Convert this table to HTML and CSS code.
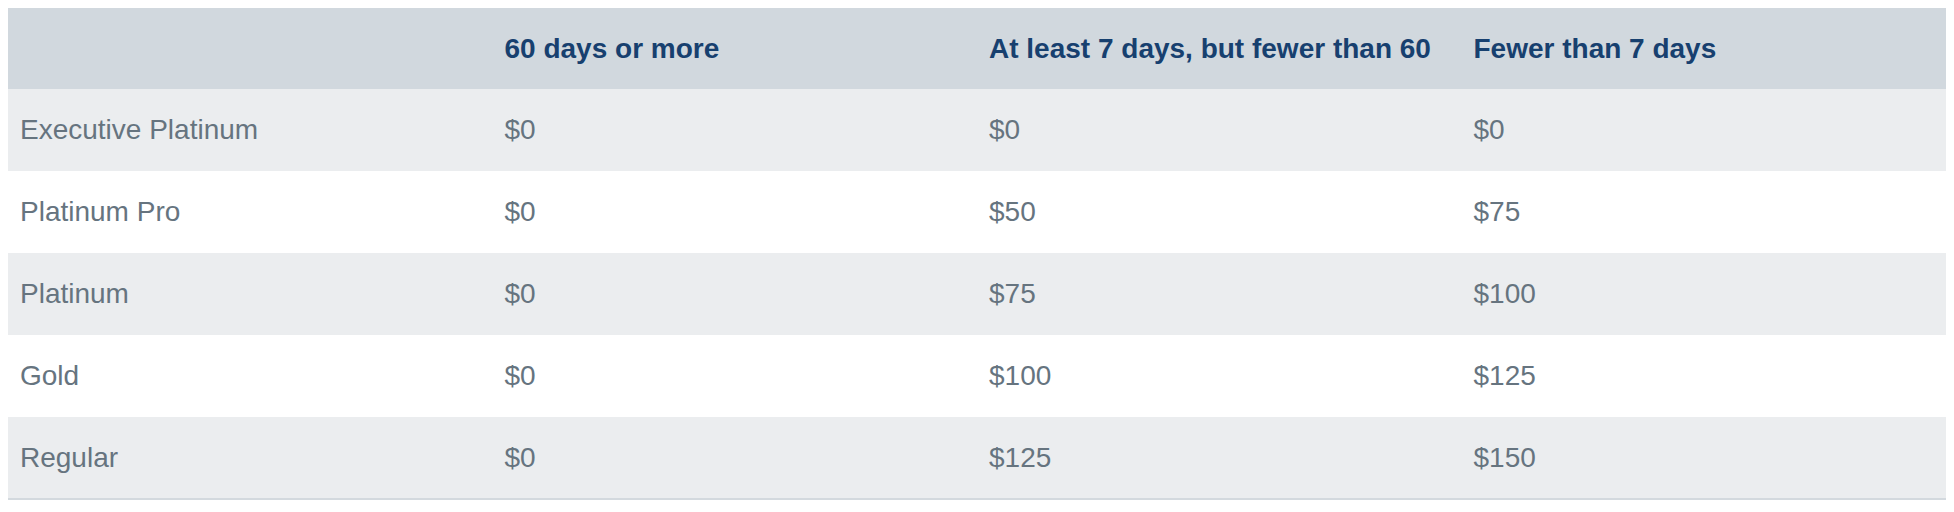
FILE: index.html
```html
<!DOCTYPE html>
<html lang="en">
<head>
<meta charset="utf-8">
<title>Fees</title>
<link rel="stylesheet" href="styles.css">
</head>
<body>
<table class="fees">
  <thead>
    <tr class="head-row">
      <th></th>
      <th>60 days or more</th>
      <th>At least 7 days, but fewer than 60</th>
      <th>Fewer than 7 days</th>
    </tr>
  </thead>
  <tbody>
    <tr class="row alt"><td>Executive Platinum</td><td>$0</td><td>$0</td><td>$0</td></tr>
    <tr class="row"><td>Platinum Pro</td><td>$0</td><td>$50</td><td>$75</td></tr>
    <tr class="row alt"><td>Platinum</td><td>$0</td><td>$75</td><td>$100</td></tr>
    <tr class="row"><td>Gold</td><td>$0</td><td>$100</td><td>$125</td></tr>
    <tr class="row alt"><td>Regular</td><td>$0</td><td>$125</td><td>$150</td></tr>
  </tbody>
</table>
</body>
</html>
```

FILE: styles.css
```css
html, body {
  margin: 0;
  padding: 0;
  background: #ffffff;
}
body {
  padding: 8px;
  font-family: "Liberation Sans", Arial, Helvetica, sans-serif;
}
.fees {
  width: 100%;
  border-collapse: collapse;
  table-layout: fixed;
  border-bottom: 2px solid #d3d9de;
}
.fees th,
.fees td {
  width: 25%;
  padding: 0 12px;
  text-align: left;
  vertical-align: middle;
  font-size: 28px;
  line-height: 32px;
  white-space: nowrap;
}
.head-row {
  height: 81px;
  background: #d1d8de;
}
.head-row th {
  color: #17406f;
  font-weight: bold;
}
.row {
  height: 82px;
  background: #ffffff;
}
.row.alt {
  background: #ebedef;
}
.row td {
  color: #66747f;
  font-weight: normal;
}
```
